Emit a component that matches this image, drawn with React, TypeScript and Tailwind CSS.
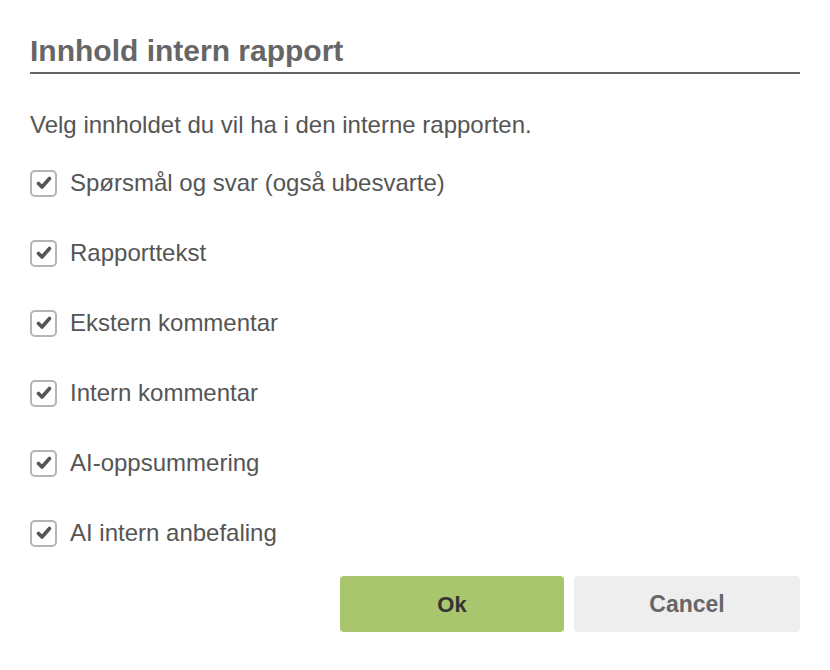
const items = [
  "Spørsmål og svar (også ubesvarte)",
  "Rapporttekst",
  "Ekstern kommentar",
  "Intern kommentar",
  "AI-oppsummering",
  "AI intern anbefaling",
];

function CheckBox() {
  return (
    <span className="flex h-[27px] w-[27px] shrink-0 items-center justify-center rounded-[5px] border-2 border-[#b5b5b5] bg-white">
      <svg width="16" height="14" viewBox="0 0 16 14">
        <path d="M2.5 7.5 L6 11 L13.5 2.5" fill="none" stroke="#555" strokeWidth="3.6" strokeLinecap="round" strokeLinejoin="round" />
      </svg>
    </span>
  );
}

export default function App() {
  return (
    <div className="h-[670px] w-[830px] bg-white px-[30px] pt-[33px] font-['Liberation_Sans',Arial,sans-serif] text-[#555]">
      <h1 className="border-b-2 border-[#666] pb-[4px] text-[30px] leading-[35px] font-bold text-[#666]">
        Innhold intern rapport
      </h1>
      <p className="mt-[37px] text-[24px] leading-[28px] text-[#555]">
        Velg innholdet du vil ha i den interne rapporten.
      </p>
      <div className="mt-[30px] flex flex-col gap-[42px]">
        {items.map((label) => (
          <label key={label} className="flex h-[28px] items-center gap-[13px]">
            <CheckBox />
            <span className="text-[24px] leading-[28px] text-[#555]">{label}</span>
          </label>
        ))}
      </div>
      <div className="mt-[29px] flex justify-end gap-[10px]">
        <button className="h-[56px] w-[224px] rounded-[4px] bg-[#a9c56e] text-[22px] font-bold text-[#333]">
          Ok
        </button>
        <button className="h-[56px] w-[226px] rounded-[4px] bg-[#eeeeee] text-[23px] font-bold text-[#666]">
          Cancel
        </button>
      </div>
    </div>
  );
}
